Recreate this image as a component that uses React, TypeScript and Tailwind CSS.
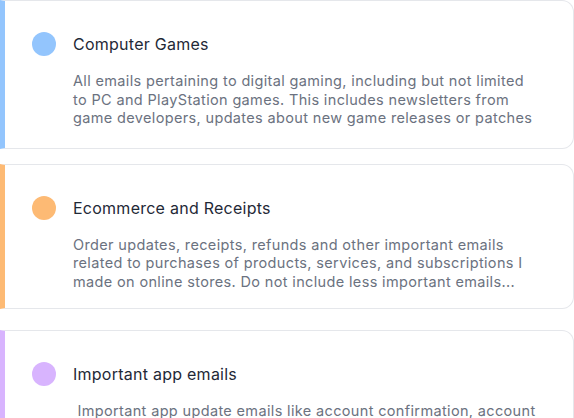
const categories = [
  {
    title: "Computer Games",
    dot: "bg-[#93c5fd]",
    bar: "border-l-[#93c5fd]",
    space: "mb-[15px] pb-5",
    text: "All emails pertaining to digital gaming, including but not limited to PC and PlayStation games. This includes newsletters from game developers, updates about new game releases or patches",
  },
  {
    title: "Ecommerce and Receipts",
    dot: "bg-[#fdba74]",
    bar: "border-l-[#fdba74]",
    space: "mb-[21px] pb-4",
    text: "Order updates, receipts, refunds and other important emails related to purchases of products, services, and subscriptions I made on online stores. Do not include less important emails...",
  },
  {
    title: "Important app emails",
    dot: "bg-[#d8b4fe]",
    bar: "border-l-[#d8b4fe]",
    space: "pb-5",
    text: " Important app update emails like account confirmation, account security alerts, password resets and verification codes from apps I use",
  },
];

export default function App() {
  return (
    <div
      className="h-[418px] w-full overflow-hidden bg-white"
      style={{ fontFamily: "Inter, 'Noto Sans', sans-serif" }}
    >
      <div className="flex flex-col">
        {categories.map((c) => (
          <div
            key={c.title}
            className={`rounded-r-xl border border-l-[5px] border-gray-200 bg-white pl-[27px] pr-[32px] pt-[31px] ${c.bar} ${c.space}`}
          >
            <div className="flex h-6 items-center gap-[17px]">
              <span className={`h-6 w-6 shrink-0 rounded-full ${c.dot}`} />
              <span className="text-[16px] tracking-[0.25px] text-[#1f2937]">{c.title}</span>
            </div>
            <p className="mt-4 whitespace-pre-wrap pl-[41px] text-[14.5px] leading-[18.6px] tracking-[0.35px] text-[#6b7280]">
              {c.text}
            </p>
          </div>
        ))}
      </div>
    </div>
  );
}
